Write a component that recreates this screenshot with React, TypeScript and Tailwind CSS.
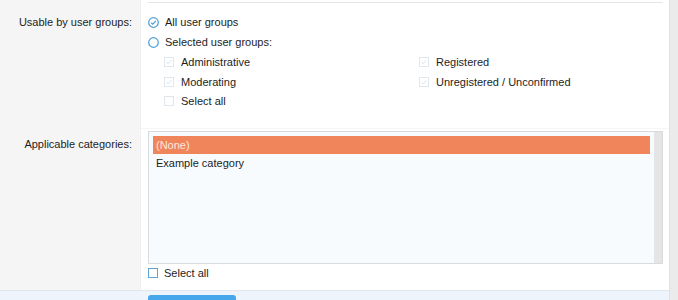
import React from "react";

const font = { fontFamily: '"Liberation Sans", Arial, sans-serif' };

const Radio = ({ checked }: { checked?: boolean }) => (
  <svg width="11" height="11" viewBox="0 0 11 11" className="shrink-0">
    <circle cx="5.5" cy="5.5" r="4.8" fill="#fff" stroke="#4b9fd8" strokeWidth="1.2" />
    {checked && (
      <path d="M3.2 5.7 L4.8 7.2 L7.9 3.9" fill="none" stroke="#4b9fd8" strokeWidth="1.2" />
    )}
  </svg>
);

const Check = ({ checked, disabled }: { checked?: boolean; disabled?: boolean }) => (
  <svg width="10" height="10" viewBox="0 0 10 10" className="shrink-0">
    <rect
      x="0.5"
      y="0.5"
      width="9"
      height="9"
      fill="#fff"
      stroke={disabled ? "#dfe6ec" : "#5fa3d6"}
      strokeWidth="1"
    />
    {checked && (
      <path d="M2.6 5.2 L4.2 6.7 L7.4 3.4" fill="none" stroke="#d2e2ee" strokeWidth="1" />
    )}
  </svg>
);

const groups = [
  ["Administrative", "Registered"],
  ["Moderating", "Unregistered / Unconfirmed"],
];

export default function App() {
  return (
    <div className="flex w-[678px] h-[300px] text-[11px] text-[#1d1d1d] bg-white" style={font}>
      <div className="w-[669px] flex flex-col">
        {/* usable by row */}
        <div className="grid grid-cols-[141px_1fr] h-[128px]">
          <div className="bg-[#f5f5f5] text-right pr-[8px] pt-[12px] leading-[20px] border-r border-[#f0f0f0]">
            Usable by user groups:
          </div>
          <div className="pl-[7px]">
            <div className="h-[3px] border-b border-[#e5e5e5] mr-[6px]" />
            <div className="pt-[9px] leading-[20px]">
              <div className="flex items-center gap-[6px] h-[20px]">
                <Radio checked />
                <span>All user groups</span>
              </div>
              <div className="flex items-center gap-[6px] h-[20px]">
                <Radio />
                <span>Selected user groups:</span>
              </div>
              <div className="pl-[16px]">
                {groups.map((pair) => (
                  <div key={pair[0]} className="grid grid-cols-[255px_1fr] h-[19.5px]">
                    {pair.map((g) => (
                      <div key={g} className="flex items-center gap-[7px]">
                        <Check checked disabled />
                        <span>{g}</span>
                      </div>
                    ))}
                  </div>
                ))}
                <div className="flex items-center gap-[7px] h-[19.5px]">
                  <Check disabled />
                  <span>Select all</span>
                </div>
              </div>
            </div>
          </div>
        </div>

        {/* categories row */}
        <div className="grid grid-cols-[141px_1fr] flex-1">
          <div className="bg-[#f5f5f5] text-right pr-[8px] pt-[6px] leading-[20px] border-r border-[#f0f0f0]">
            Applicable categories:
          </div>
          <div className="pl-[7px] pr-[6px] border-t border-[#f5f5f5] pt-[2px]">
            <div className="flex h-[133px] border border-[#d9dcde] bg-[#f7fbfd]">
              <div className="flex-1 p-[4px]">
                <div className="h-[18px] leading-[18px] px-[3px] bg-[#f0845a] text-[#ffe9dd]">(None)</div>
                <div className="h-[18px] leading-[18px] px-[3px]">Example category</div>
              </div>
              <div className="w-[8px] bg-[#e5e5e5]" />
            </div>
            <div className="flex items-center gap-[6px] h-[16px] mt-[1px]">
              <Check />
              <span>Select all</span>
            </div>
          </div>
        </div>

        {/* footer */}
        <div className="h-[10px] border-t border-[#dfe6ee] bg-[#edf4fb] pl-[148px] pt-[4px]">
          <div className="w-[88px] h-full rounded-t-[3px] bg-[#47a7eb]" />
        </div>
      </div>
      <div className="flex-1 bg-[#ebebeb] border-l border-[#e2e2e2]" />
    </div>
  );
}
